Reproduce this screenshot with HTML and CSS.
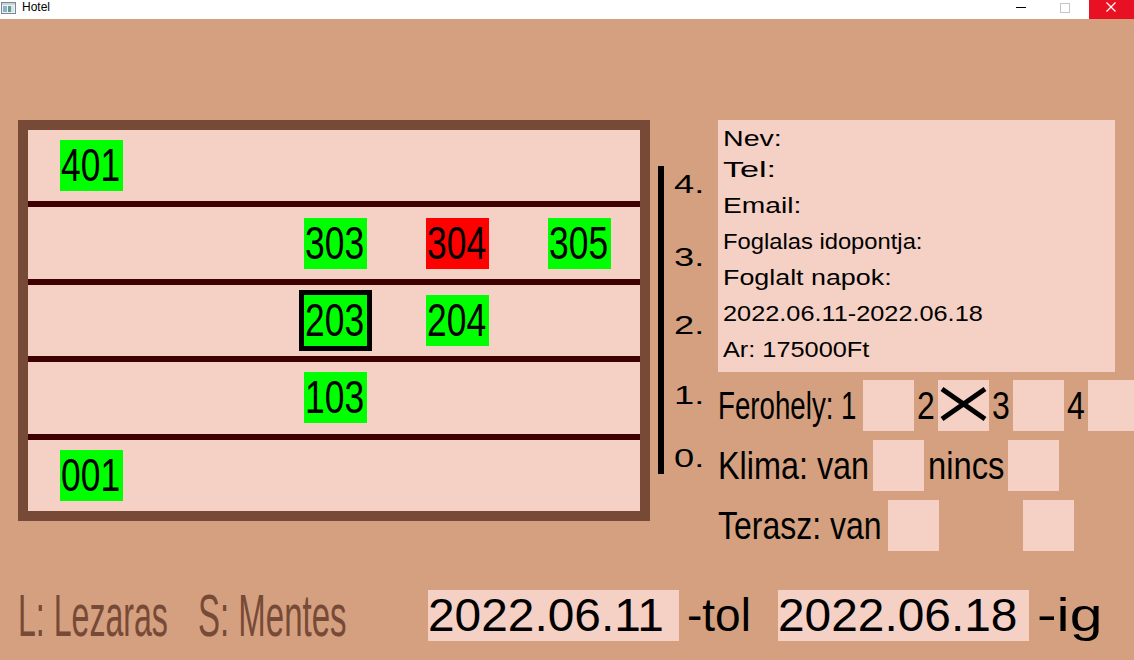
FILE: index.html
```html
<!DOCTYPE html>
<html lang="hu">
<head>
<meta charset="utf-8">
<title>Hotel</title>
<link rel="stylesheet" href="styles.css">
</head>
<body>
<div class="window">
  <header class="titlebar">
    <div class="tb-left">
      <svg class="app-icon" width="15" height="12" viewBox="0 0 15 12">
        <rect x="0.5" y="0.5" width="14" height="11" fill="#eef2f4" stroke="#7b8794"/>
        <rect x="1" y="1" width="13" height="2" fill="#c9d3db"/>
        <rect x="2" y="4" width="4" height="6" fill="#8fb0c8"/>
        <rect x="7" y="4" width="3" height="6" fill="#5f9e8a"/>
        <rect x="10" y="4" width="3" height="6" fill="#d6e6e0"/>
      </svg>
      <span class="tb-title">Hotel</span>
    </div>
    <div class="tb-controls">
      <span class="tb-btn tb-min"><svg width="10" height="10" viewBox="0 0 10 10"><line x1="0" y1="5.5" x2="10" y2="5.5" stroke="#000" stroke-width="1"/></svg></span>
      <span class="tb-btn tb-max"><svg width="10" height="10" viewBox="0 0 10 10"><rect x="0.5" y="0.5" width="9" height="9" fill="none" stroke="#c4c4c4" stroke-width="1"/></svg></span>
      <span class="tb-btn tb-close"><svg width="10" height="10" viewBox="0 0 10 10"><path d="M0.5 0.5 L9.5 9.5 M9.5 0.5 L0.5 9.5" stroke="#fff" stroke-width="1.2"/></svg></span>
    </div>
  </header>

  <main class="stage">
    <section class="building">
      <div class="floor">
        <div class="room free col-1"><span class="sx num">401</span></div>
      </div>
      <div class="slab"></div>
      <div class="floor">
        <div class="room free col-3"><span class="sx num">303</span></div>
        <div class="room taken col-4"><span class="sx num">304</span></div>
        <div class="room free col-5"><span class="sx num">305</span></div>
      </div>
      <div class="slab"></div>
      <div class="floor">
        <div class="room free col-3 selected"><span class="sx num">203</span></div>
        <div class="room free col-4"><span class="sx num">204</span></div>
      </div>
      <div class="slab"></div>
      <div class="floor">
        <div class="room free col-3"><span class="sx num">103</span></div>
      </div>
      <div class="slab"></div>
      <div class="floor">
        <div class="room free col-1"><span class="sx num">001</span></div>
      </div>
    </section>

    <div class="scale">
      <div class="bar"></div>
      <div class="levels">
        <div class="lvl l4"><span class="sx lv">4.</span></div>
        <div class="lvl l3"><span class="sx lv">3.</span></div>
        <div class="lvl l2"><span class="sx lv">2.</span></div>
        <div class="lvl l1"><span class="sx lv">1.</span></div>
        <div class="lvl l0"><span class="sx lv">0.</span></div>
      </div>
    </div>

    <aside class="side">
      <div class="info">
        <div class="iline first"><span class="sx i-nev">Nev:</span></div>
        <div class="iline"><span class="sx i-tel">Tel:</span></div>
        <div class="iline"><span class="sx i-email">Email:</span></div>
        <div class="iline"><span class="sx i-fi">Foglalas idopontja:</span></div>
        <div class="iline"><span class="sx i-fn">Foglalt napok:</span></div>
        <div class="iline"><span class="sx i-date">2022.06.11-2022.06.18</span></div>
        <div class="iline"><span class="sx i-ar">Ar: 175000Ft</span></div>
      </div>

      <div class="opts">
        <div class="orow">
          <div class="olabel w-fero"><span class="sx o-fero">Ferohely: 1</span></div>
          <div class="obox"></div>
          <div class="onum"><span class="sx o-num">2</span></div>
          <div class="obox">
            <svg class="xmark" width="51" height="51" viewBox="0 0 51 51">
              <path d="M4 9 L47 39 M4 39 L47 9" stroke="#000" stroke-width="5" fill="none"/>
            </svg>
          </div>
          <div class="onum"><span class="sx o-num">3</span></div>
          <div class="obox"></div>
          <div class="onum"><span class="sx o-num">4</span></div>
          <div class="obox"></div>
        </div>
        <div class="orow">
          <div class="olabel w-klima"><span class="sx o-klima">Klima: van</span></div>
          <div class="obox"></div>
          <div class="oword"><span class="sx o-nincs">nincs</span></div>
          <div class="obox"></div>
        </div>
        <div class="orow">
          <div class="olabel w-terasz"><span class="sx o-terasz">Terasz: van</span></div>
          <div class="obox"></div>
          <div class="oword"></div>
          <div class="obox"></div>
        </div>
      </div>
    </aside>
  </main>

  <footer class="footer">
    <div class="legend w-l"><span class="sx lg-l">L: Lezaras</span></div>
    <div class="legend w-s"><span class="sx lg-s">S: Mentes</span></div>
    <div class="datebox"><span class="sx d-date">2022.06.11</span></div>
    <div class="suffix w-tol"><span class="sx d-tol">-tol</span></div>
    <div class="datebox"><span class="sx d-date">2022.06.18</span></div>
    <div class="suffix"><span class="sx d-ig">-ig</span></div>
  </footer>
</div>
</body>
</html>
```

FILE: styles.css
```css
html, body {
  margin: 0;
  padding: 0;
}

body {
  width: 1134px;
  height: 660px;
  overflow: hidden;
  background: #D5A07F;
  font-family: "Liberation Sans", Arial, sans-serif;
  color: #000;
}

.window {
  width: 1134px;
  height: 660px;
  overflow: hidden;
}

/* generic horizontally-scaled text */
.sx {
  display: inline-block;
  white-space: nowrap;
  transform-origin: 0 50%;
}

/* ---------- title bar ---------- */
.titlebar {
  height: 19px;
  background: #fff;
  display: flex;
  justify-content: space-between;
  align-items: flex-start;
}

.tb-left {
  display: flex;
  align-items: flex-start;
}

.app-icon {
  display: block;
  margin: 2px 0 0 1px;
}

.tb-title {
  margin-left: 6px;
  font-size: 12px;
  line-height: 15px;
  font-family: "Liberation Sans", Arial, sans-serif;
}

.tb-controls {
  display: flex;
  height: 19px;
}

.tb-btn {
  width: 45px;
  height: 19px;
  display: flex;
  justify-content: center;
  align-items: flex-start;
}

.tb-btn svg {
  display: block;
}

.tb-min svg { margin-top: 2px; margin-left: -1px; }
.tb-max svg { margin-top: 3px; margin-left: -3px; }
.tb-close { background: #E81123; }
.tb-close svg { margin-top: 2px; margin-left: -2px; }

/* ---------- stage ---------- */
.stage {
  height: 571px;
  box-sizing: border-box;
  padding: 101px 0 0 18px;
  display: flex;
  align-items: flex-start;
}

/* building */
.building {
  width: 632px;
  height: 401px;
  box-sizing: border-box;
  border: 10px solid #774A37;
  background: #F5D0C4;
  display: flex;
  flex-direction: column;
}

.floor {
  flex: 1;
  display: grid;
  grid-template-columns: repeat(5, 63px);
  column-gap: 59px;
  padding-left: 32px;
  align-items: center;
}

.slab {
  height: 6px;
  background: #3E0000;
}

.room {
  width: 63px;
  height: 51px;
  box-sizing: border-box;
  padding-left: 1px;
  font-size: 46px;
  line-height: 51px;
  overflow: visible;
  grid-row: 1;
}

.room.free { background: #00FF00; }
.room.taken { background: #FF0000; }
.room.selected { outline: 5px solid #000; }

.col-1 { grid-column: 1; }
.col-3 { grid-column: 3; }
.col-4 { grid-column: 4; }
.col-5 { grid-column: 5; }

.num { transform: scaleX(0.77); }

/* scale */
.scale {
  width: 60px;
  margin-left: 8px;
  display: flex;
  align-items: flex-start;
}

.bar {
  width: 6px;
  height: 308px;
  margin-top: 46px;
  background: #000;
}

.levels {
  margin-left: 10px;
  padding-top: 52px;
  display: flex;
  flex-direction: column;
}

.lvl {
  height: 25px;
  font-size: 25px;
  line-height: 25px;
}

.l3 { margin-top: 48px; }
.l2 { margin-top: 43px; }
.l1 { margin-top: 45px; }
.l0 { margin-top: 38px; }

.lv { transform: scaleX(1.45); }

/* side panel */
.side {
  width: 416px;
}

.info {
  width: 397px;
  height: 252px;
  box-sizing: border-box;
  background: #F5D0C4;
  padding: 6px 0 0 5px;
}

.iline {
  height: 36px;
  font-size: 22px;
  line-height: 36px;
}

.iline.first {
  height: 26px;
  line-height: 26px;
}

.i-nev   { transform: scaleX(1.3); }
.i-tel   { transform: scaleX(1.55); }
.i-email { transform: scaleX(1.28); }
.i-fi    { transform: scaleX(1.08); }
.i-fn    { transform: scaleX(1.22); }
.i-date  { transform: scaleX(1.15); }
.i-ar    { transform: scaleX(1.15); }

.opts {
  margin-top: 8px;
  display: flex;
  flex-direction: column;
  gap: 9px;
}

.orow {
  display: flex;
  height: 51px;
  font-size: 39px;
  line-height: 51px;
}

.olabel {
  flex: none;
}

.w-fero   { width: 145px; }
.w-klima  { width: 155px; }
.w-terasz { width: 170px; }

.o-fero   { transform: scaleX(0.71); }
.o-klima  { transform: scaleX(0.83); }
.o-terasz { transform: scaleX(0.82); }

.obox {
  flex: none;
  width: 51px;
  height: 51px;
  background: #F5D0C4;
}

.xmark {
  display: block;
}

.onum {
  flex: none;
  width: 24px;
  box-sizing: border-box;
  padding-left: 3px;
}

.o-num { transform: scaleX(0.82); }

.oword {
  flex: none;
  width: 84px;
  box-sizing: border-box;
  padding-left: 4px;
}

.o-nincs { transform: scaleX(0.84); }

/* ---------- footer ---------- */
.footer {
  height: 51px;
  display: flex;
  padding-left: 18px;
}

.legend {
  flex: none;
  font-size: 60px;
  line-height: 51px;
  color: #774A37;
}

.w-l { width: 180px; }
.w-s { width: 230px; }

.lg-l { transform: scaleX(0.535); }
.lg-s { transform: scaleX(0.55); }

.datebox {
  flex: none;
  width: 251px;
  height: 51px;
  background: #F5D0C4;
  font-size: 46px;
  line-height: 51px;
}

.d-date { transform: scaleX(1.04); }

.suffix {
  flex: none;
  font-size: 46px;
  line-height: 51px;
  padding-left: 8px;
  box-sizing: border-box;
}

.w-tol { width: 99px; }

.d-tol { transform: scaleX(1); }
.d-ig  { transform: scaleX(1.28); }
```
